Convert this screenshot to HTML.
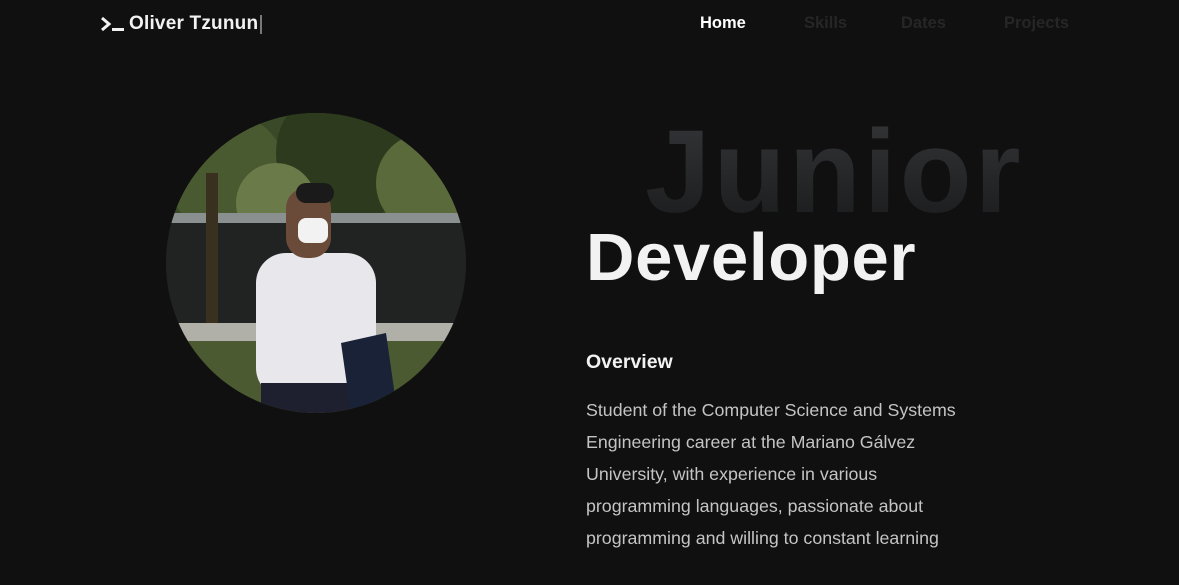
<!DOCTYPE html>
<html><head><meta charset="utf-8">
<style>
*{margin:0;padding:0;box-sizing:border-box}
html,body{width:1179px;height:585px;background:#101010;overflow:hidden;font-family:"Liberation Sans",sans-serif}
.logo{position:absolute;left:100px;top:13px;color:#f2f2f2;font-weight:bold;font-size:19px;letter-spacing:0.2px;display:flex;align-items:center}
.logo .cur{display:inline-block;width:2px;height:19px;background:#777;margin-left:2px}
nav{position:absolute;top:14px;font-weight:bold;font-size:16.5px}
nav span{position:absolute;white-space:nowrap}
.junior{position:absolute;left:645px;top:113px;font-weight:bold;font-size:118px;letter-spacing:3px;line-height:1;
background:linear-gradient(#333538,#1a1b1c);-webkit-background-clip:text;background-clip:text;color:transparent}
.dev{position:absolute;left:586px;top:224px;font-weight:bold;font-size:67px;color:#f2f2f2;letter-spacing:0.7px;line-height:1}
.ov{position:absolute;left:586px;top:351px;color:#f2f2f2;font-size:19.5px;font-weight:bold}
.p{position:absolute;left:586px;top:394px;color:#c4c4c4;font-size:17.8px;line-height:32px;white-space:nowrap}
.photo{position:absolute;left:166px;top:113px;width:300px;height:300px;border-radius:50%;overflow:hidden}
</style></head><body>
<div class="logo"><svg width="26" height="20" viewBox="0 0 26 20"><path d="M2 4 L9 10 L2 16" stroke="#f2f2f2" stroke-width="3" fill="none"/><rect x="12" y="14" width="12" height="3" fill="#f2f2f2"/></svg><span style="margin-left:3px">Oliver Tzunun</span><span class="cur"></span></div>
<nav>
<span style="left:700px;color:#fff">Home</span>
<span style="left:804px;color:#262626">Skills</span>
<span style="left:901px;color:#262626">Dates</span>
<span style="left:1004px;color:#262626">Projects</span>
</nav>
<div class="photo">
<svg width="300" height="300" viewBox="0 0 300 300">
<rect width="300" height="300" fill="#1e2418"/>
<rect x="0" y="0" width="300" height="120" fill="#3a4a28"/>
<circle cx="60" cy="60" r="60" fill="#4a5a30"/>
<circle cx="180" cy="40" r="70" fill="#2e3a1e"/>
<circle cx="260" cy="70" r="50" fill="#5a6a3a"/>
<circle cx="110" cy="90" r="40" fill="#6a7a48"/>
<rect x="0" y="100" width="300" height="120" fill="#202322"/>
<rect x="0" y="100" width="300" height="10" fill="#8a9090"/>
<rect x="40" y="60" width="12" height="160" fill="#3a3020"/>
<rect x="0" y="210" width="300" height="20" fill="#b0b0a8"/>
<rect x="0" y="228" width="300" height="72" fill="#4c5a32"/>
<rect x="90" y="140" width="120" height="145" rx="30" fill="#e8e8ec"/>
<rect x="120" y="75" width="45" height="70" rx="20" fill="#6a4a38"/>
<rect x="132" y="105" width="30" height="25" rx="8" fill="#f2f2f2"/>
<rect x="130" y="70" width="38" height="20" rx="10" fill="#1a1a1a"/>
<rect x="95" y="270" width="110" height="40" fill="#1e2030"/>
<path d="M175 230 L220 220 L230 290 L185 300 Z" fill="#1a2238"/>
</svg>
</div>
<div class="junior">Junior</div>
<div class="dev">Developer</div>
<div class="ov">Overview</div>
<div class="p">Student of the Computer Science and Systems<br>Engineering career at the Mariano Gálvez<br>University, with experience in various<br>programming languages, passionate about<br>programming and willing to constant learning</div>
</body></html>
